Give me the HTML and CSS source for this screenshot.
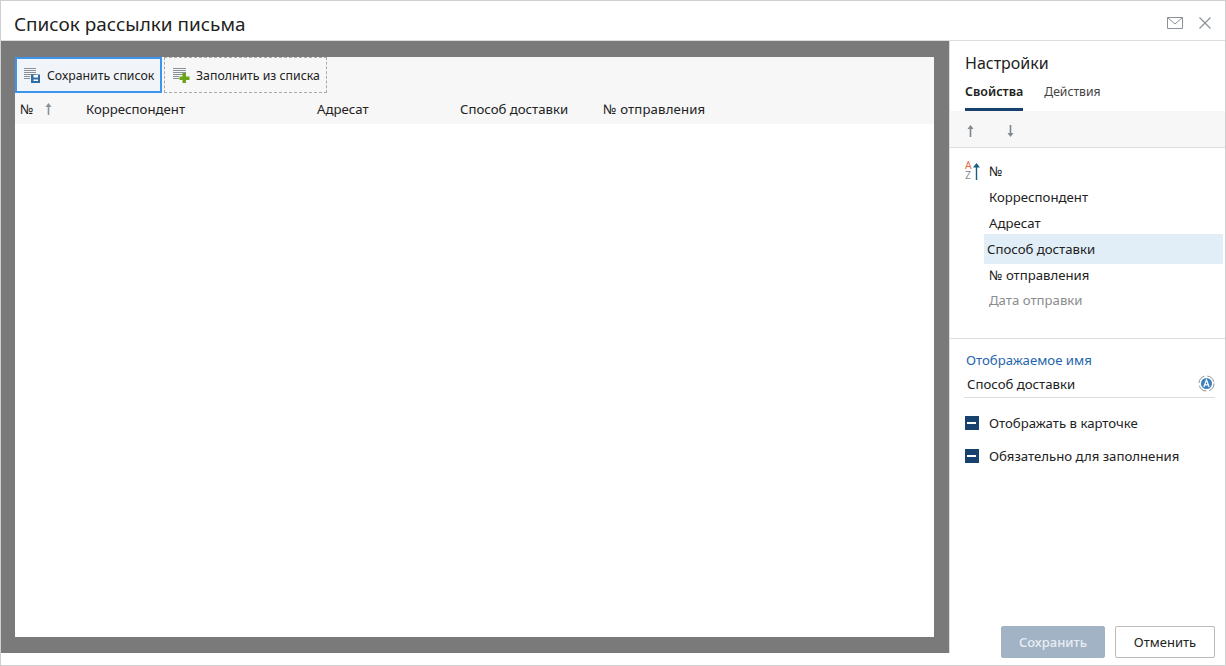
FILE: index.html
```html
<!DOCTYPE html>
<html lang="ru">
<head>
<meta charset="utf-8">
<title>Список рассылки письма</title>
<link rel="stylesheet" href="styles.css">
</head>
<body>
<div class="window">
  <header class="titlebar">
    <h1 class="title">Список рассылки письма</h1>
    <div class="title-actions">
      <svg class="icon-mail" width="17" height="13" viewBox="0 0 17 13"><path d="M.5.5h15v11H.5z M.5.5l7.500 6.500 7.500-6.500" fill="none" stroke="#8a9299"/></svg>
      <svg class="icon-close" width="12" height="12" viewBox="0 0 12 12"><path d="M.5.5l11 11M11.500.5l-11 11" fill="none" stroke="#8a9299" stroke-width="1.200"/></svg>
    </div>
  </header>
  <div class="main">
    <section class="stage">
      <div class="sheet">
        <div class="toolbar">
          <button class="tool tool-active">
            <svg width="17" height="15" viewBox="0 0 17 15"><path d="M0 .5h12M0 2.500h12M0 4.500h12M0 6.500h12M0 8.500h6M0 10.500h6" stroke="#8a9299" fill="none"/><path d="M7 6.500h9v8.500H7z" fill="#2f6ea5"/><path d="M9.500 7h4.500v2.500H9.500zM9.500 11.500h4.500V13H9.500z" fill="#fff"/></svg>
            <span>Сохранить список</span>
          </button>
          <button class="tool tool-dashed">
            <svg width="17" height="15" viewBox="0 0 17 15"><path d="M0 .5h13M0 2.500h13M0 4.500h13M0 6.500h13M0 8.500h6M0 10.500h6" stroke="#8a9299" fill="none"/><path d="M9.500 5h3.500v3.500h3.500V12H13v3H9.500v-3H6.500V8.500h3z" fill="#6aa517"/></svg>
            <span>Заполнить из списка</span>
          </button>
        </div>
        <div class="thead">
          <div class="th th-num">№
            <svg class="sort" width="7" height="12" viewBox="0 0 7 12"><path d="M3.500 0L6.500 4H4.300v8H2.700V4H.5z" fill="#8a9299"/></svg>
          </div>
          <div class="th th-corr">Корреспондент</div>
          <div class="th th-addr">Адресат</div>
          <div class="th th-way">Способ доставки</div>
          <div class="th th-track">№ отправления</div>
        </div>
      </div>
    </section>
    <aside class="side">
      <h2 class="side-title">Настройки</h2>
      <nav class="tabs">
        <div class="tab tab-on">Свойства</div>
        <div class="tab">Действия</div>
      </nav>
      <div class="move-bar">
        <svg width="7" height="12" viewBox="0 0 7 12"><path d="M3.500 0L6.500 4H4.300v8H2.700V4H.5z" fill="#7f8890"/></svg>
        <svg width="7" height="12" viewBox="0 0 7 12"><path d="M3.500 12L6.500 8H4.300V0H2.700v8H.5z" fill="#7f8890"/></svg>
      </div>
      <div class="fields">
        <div class="field field-first">
          <span class="az"><span class="az-a">A</span><span class="az-z">Z</span></span>
          <svg class="az-arrow" width="7" height="17" viewBox="0 0 7 17"><path d="M3.500 0L7 4.500H4.200V17H2.800V4.500H0z" fill="#17617f"/></svg>
          <span>№</span>
        </div>
        <div class="field">Корреспондент</div>
        <div class="field">Адресат</div>
        <div class="field field-sel">Способ доставки</div>
        <div class="field">№ отправления</div>
        <div class="field field-off">Дата отправки</div>
      </div>
      <div class="props">
        <div class="prop-label">Отображаемое имя</div>
        <div class="prop-input">
          <span>Способ доставки</span>
          <svg width="17" height="17" viewBox="0 0 17 17"><circle cx="8.500" cy="8.500" r="7.500" fill="none" stroke="#8a9299" stroke-dasharray="9 3"/><circle cx="8.500" cy="8.500" r="5.500" fill="#3f7fbf"/><path d="M5.800 12l2.700-7 2.700 7M6.800 9.800h3.400" fill="none" stroke="#fff" stroke-width="1.200"/></svg>
        </div>
        <label class="check"><span class="box"></span>Отображать в карточке</label>
        <label class="check"><span class="box"></span>Обязательно для заполнения</label>
      </div>
      <div class="actions">
        <button class="btn btn-primary">Сохранить</button>
        <button class="btn">Отменить</button>
      </div>
    </aside>
  </div>
</div>
</body>
</html>
```
FILE: styles.css
```css
* { box-sizing: border-box; }
html, body { margin: 0; height: 100%; }
body { background: #fff; font-family: "Noto Sans", "Open Sans", sans-serif; font-size: 13.200px; color: #222; overflow: hidden; }
.window { width: 1226px; height: 666px; border: 1px solid #cfcfcf; display: flex; flex-direction: column; background: #fff; }
.titlebar { height: 40px; flex: none; display: flex; align-items: center; justify-content: space-between; padding: 0 13px 0 13px; border-bottom: 1px solid #ddd; }
.title { margin: 7px 0 0; font-size: 18.950px; font-weight: 400; color: #222; }
.title-actions { display: flex; align-items: center; gap: 15px; margin: 5px 1px 0 0; }
.icon-mail, .icon-close { display: block; }
.main { flex: 1; display: flex; min-height: 0; }
.stage { width: 949px; flex: none; background: #7a7a7a; border-right: 1px solid #ddd; padding: 16px 15px 16px 14px; margin-bottom: 12px; }
.sheet { height: 100%; background: #fff; }
.toolbar { height: 36px; background: #f7f7f7; display: flex; gap: 2px; }
.tool { height: 36px; border: 0; background: transparent; display: flex; align-items: center; gap: 6px; font: inherit; font-size: 12.300px; color: #222; padding: 0 0 0 8px; white-space: nowrap; }
.tool svg { flex: none; }
.tool-active { width: 147px; border: 2px solid #3d94ec; background: #f1f4f8; padding-left: 7px; }
.tool-dashed { width: 163px; border: 1px dashed #aaa; }
.thead { height: 31px; background: #f7f7f7; display: flex; align-items: center; }
.th { flex: none; display: flex; align-items: center; }
.th-num { width: 71px; padding-left: 5px; gap: 12px; }
.th-corr { width: 231px; }
.th-addr { width: 143px; }
.th-way { width: 143px; }
.th-track { letter-spacing: .15px; }
.side { flex: 1; display: flex; flex-direction: column; min-width: 0; }
.side-title { margin: 0; padding: 11px 0 0 15px; font-size: 16px; font-weight: 400; line-height: 22px; height: 33px; }
.tabs { display: flex; gap: 21px; padding-left: 15px; height: 37px; flex: none; }
.tab { height: 37px; line-height: 36px; font-size: 12.200px; color: #444; }
.tab-on { font-size: 12.500px; font-weight: 600; color: #222; border-bottom: 3px solid #17426f; }
.move-bar { height: 37px; flex: none; background: #f7f7f7; border-bottom: 1px solid #ddd; display: flex; align-items: center; gap: 33px; padding: 4px 0 0 17px; }
.fields { height: 191px; flex: none; border-bottom: 1px solid #ddd; padding: 10px 2px 0 34px; }
.field { height: 26px; line-height: 26px; padding-left: 5px; position: relative; }
.az { position: absolute; left: -19px; top: 3px; display: flex; flex-direction: column; font-size: 10.500px; line-height: 9.500px; }
.az-a { color: #e0704a; }
.az-z { color: #8a9299; }
.az-arrow { position: absolute; left: -11px; top: 5px; }
.field-sel { height: 30px; line-height: 30px; margin: -2px 0; background: #e1eef8; padding-left: 3px; }
.field-off { color: #8c8c8c; margin-top: -3px; line-height: 26px; padding-top: 2px; }
.props { padding: 10px 10px 0 14px; flex: 1; }
.prop-label { color: #1f65ad; line-height: 22px; height: 23px; padding-left: 2px; }
.prop-input { height: 26px; border-bottom: 1px solid #ddd; display: flex; align-items: center; justify-content: space-between; padding: 0 0 2px 3px; }
.check { display: flex; align-items: center; gap: 10px; height: 33px; padding-left: 1px; }
.prop-input + .check { margin-top: 8px; }
.box { width: 14px; height: 14px; background: #17426f; position: relative; flex: none; }
.box::after { content: ""; position: absolute; left: 2px; right: 3px; top: 6px; height: 2px; background: #fff; }
.actions { display: flex; justify-content: flex-end; gap: 10px; padding: 0 10px 7px 0; }
.btn { height: 32px; width: 100px; border: 1px solid #bbb; border-radius: 2px; background: #fff; font: inherit; font-size: 13px; color: #222; }
.btn-primary { width: 104px; background: #a2b3c6; border-color: #a2b3c6; color: #e9eef3; font-weight: 500; }
```
